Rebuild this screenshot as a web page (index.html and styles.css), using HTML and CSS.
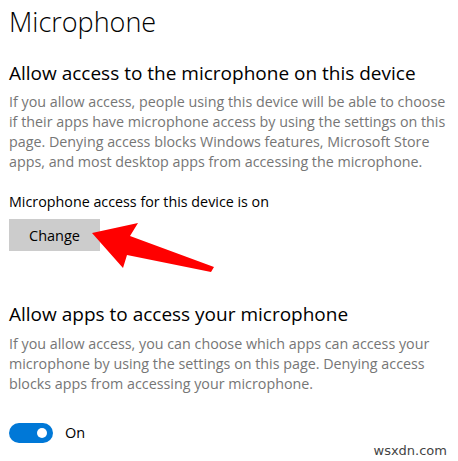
FILE: index.html
```html
<!DOCTYPE html>
<html>
<head>
<meta charset="utf-8">
<link rel="stylesheet" href="styles.css">
</head>
<body>
<div class="page">
  <h1 class="title">Microphone</h1>
  <h2 class="heading first">Allow access to the microphone on this device</h2>
  <p class="desc">If you allow access, people using this device will be able to choose if their apps have microphone access by using the settings on this page. Denying access blocks Windows features, Microsoft Store apps, and most desktop apps from accessing the microphone.</p>
  <p class="status">Microphone access for this device is on</p>
  <div class="button-row">
    <button class="btn">Change</button>
    <svg class="arrow" width="130" height="62" viewBox="0 0 130 62">
      <polygon points="2,18 48,8 40,21 124,52 121,57 37,40 33,53" fill="#ff0000"/>
    </svg>
  </div>
  <h2 class="heading second">Allow apps to access your microphone</h2>
  <p class="desc second-desc">If you allow access, you can choose which apps can access your microphone by using the settings on this page. Denying access blocks apps from accessing your microphone.</p>
  <div class="toggle-row">
    <span class="toggle"><span class="knob"></span></span>
    <span class="toggle-label">On</span>
  </div>
  <div class="watermark">wsxdn.com</div>
</div>
</body>
</html>
```
FILE: styles.css
```css
html, body {
  margin: 0;
  padding: 0;
  background: #ffffff;
}
body {
  font-family: "Open Sans", "Noto Sans", sans-serif;
  width: 458px;
  height: 461px;
  overflow: hidden;
}
.page {
  position: relative;
  padding: 0 4px 0 9px;
  height: 461px;
  box-sizing: border-box;
}
.title {
  margin: 0;
  padding-top: 2px;
  font-size: 27px;
  font-weight: 300;
  line-height: 40px;
  color: #000;
}
.heading {
  margin: 0;
  font-size: 19px;
  font-weight: 400;
  line-height: 26px;
  color: #000;
}
.heading.first {
  margin-top: 18px;
}
.heading.second {
  margin-top: 50px;
}
.desc {
  margin: 6px 0 0;
  font-size: 14.3px;
  line-height: 20px;
  color: #767676;
}
.desc.second-desc {
  margin-top: 7px;
}
.status {
  margin: 20px 0 0;
  font-size: 14.3px;
  line-height: 20px;
  color: #000;
}
.button-row {
  position: relative;
  margin-top: 7px;
  height: 32px;
}
.btn {
  display: block;
  width: 91px;
  height: 32px;
  border: none;
  background: #cccccc;
  font-family: inherit;
  font-size: 14.5px;
  color: #000;
  padding: 0;
}
.arrow {
  position: absolute;
  left: 81px;
  top: -4px;
}
.toggle-row {
  display: flex;
  align-items: center;
  gap: 12px;
  margin-top: 29px;
}
.toggle {
  position: relative;
  display: inline-block;
  width: 44px;
  height: 20px;
  border-radius: 10px;
  background: #0078d7;
}
.knob {
  position: absolute;
  right: 6px;
  top: 5px;
  width: 10px;
  height: 10px;
  border-radius: 50%;
  background: #fff;
}
.toggle-label {
  font-size: 14.5px;
  line-height: 20px;
  color: #000;
}
.watermark {
  position: absolute;
  right: 11px;
  bottom: 3px;
  font-family: "DejaVu Sans", sans-serif;
  font-size: 13px;
  color: #444;
}
```
